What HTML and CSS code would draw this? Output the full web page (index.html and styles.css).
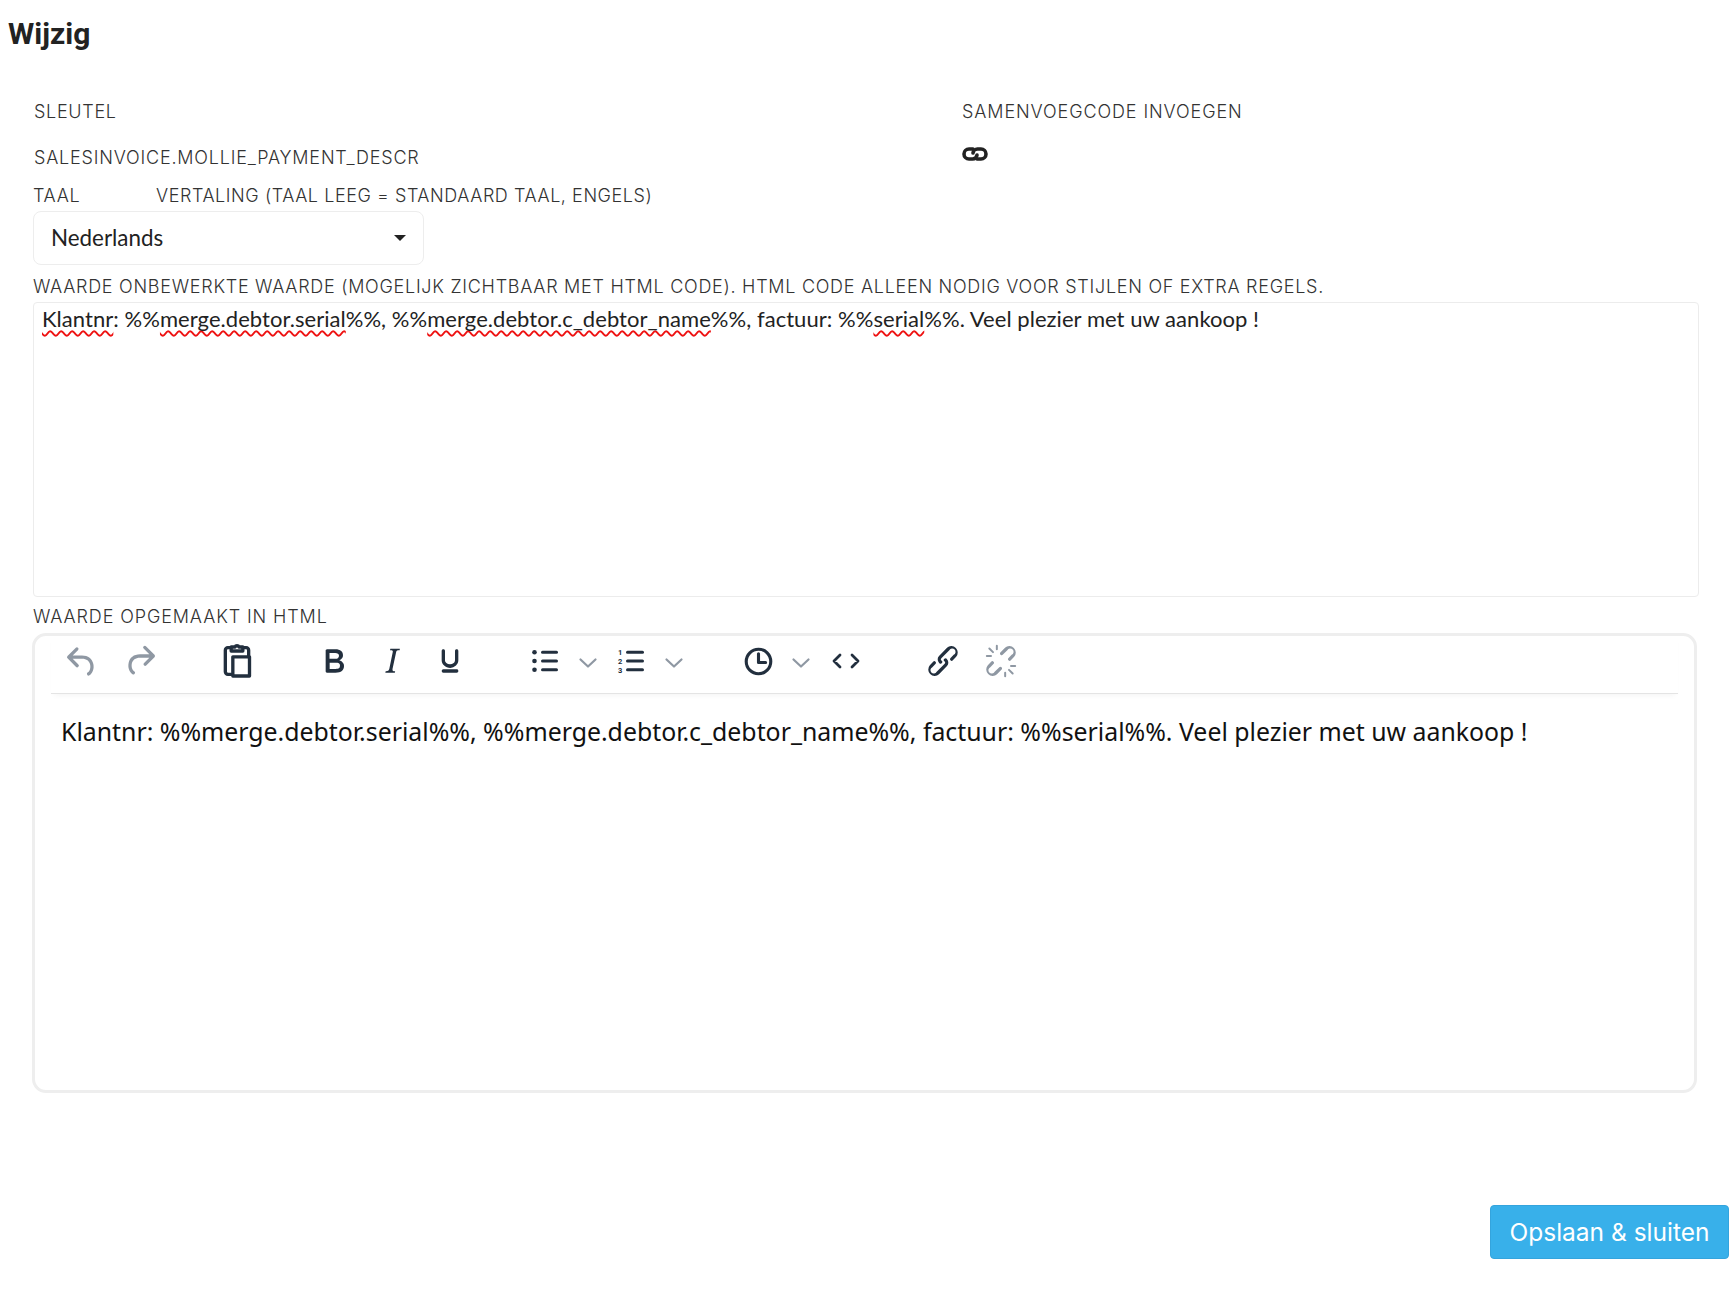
FILE: index.html
```html
<!DOCTYPE html>
<html lang="nl">
<head>
<meta charset="utf-8">
<title>Wijzig</title>
<link rel="stylesheet" href="styles.css">
</head>
<body>
<h1 class="title">Wijzig</h1>
<form class="form">
  <div class="meta">
    <div class="meta-col">
      <div class="label label-key">SLEUTEL</div>
      <div class="label label-value">SALESINVOICE.MOLLIE_PAYMENT_DESCR</div>
    </div>
    <div class="meta-col">
      <div class="label label-merge">SAMENVOEGCODE INVOEGEN</div>
      <div class="merge-icon">
        <svg width="26" height="16" viewBox="0 0 26 16" fill="none" stroke="#222" stroke-width="3.6" stroke-linecap="round"><path d="M11 3H7a5 5 0 0 0 0 10h3.5a4.5 4.5 0 0 0 4.5-4"/><path d="M15 13h4a5 5 0 0 0 0-10h-3.500a4.500 4.500 0 0 0-4.500 4"/></svg>
      </div>
    </div>
  </div>
  <div class="lang-labels">
    <span class="label label-lang">TAAL</span>
    <span class="label label-trans">VERTALING (TAAL LEEG = STANDAARD TAAL, ENGELS)</span>
  </div>
  <div class="select"><span>Nederlands</span><i class="caret"></i></div>
  <div class="label label-raw">WAARDE ONBEWERKTE WAARDE (MOGELIJK ZICHTBAAR MET HTML CODE). HTML CODE ALLEEN NODIG VOOR STIJLEN OF EXTRA REGELS.</div>
  <div class="rawtext"><span class="typo">Klantnr</span>: %%<span class="typo">merge.debtor.serial</span>%%, %%<span class="typo">merge.debtor.c_debtor_name</span>%%, factuur: %%<span class="typo">serial</span>%%. Veel plezier met uw aankoop !</div>
  <div class="label label-html">WAARDE OPGEMAAKT IN HTML</div>
  <div class="editor">
    <div class="toolbar">
      <span class="tb tb-undo dim"><svg viewBox="0 0 24 24"><path d="M6.400 8H12c3.700 0 6.200 2 6.800 5.100.6 2.700-.4 5.600-2.300 6.800a1 1 0 0 1-1-1.800c1.100-.6 1.800-2.700 1.400-4.600-.5-2.100-2.100-3.500-4.900-3.500H6.400l3.300 3.300a1 1 0 1 1-1.400 1.400l-5-5a1 1 0 0 1 0-1.400l5-5a1 1 0 0 1 1.400 1.400L6.400 8Z" transform="translate(0 .7)"/></svg></span>
      <span class="tb tb-undo tb-redo dim"><svg viewBox="0 0 24 24"><path d="M17.600 10H12c-2.800 0-4.400 1.400-4.900 3.500-.4 2 .3 4 1.400 4.600a1 1 0 1 1-1 1.800c-2-1.200-2.900-4.100-2.300-6.800.6-3 3-5.100 6.800-5.100h5.600l-3.300-3.300a1 1 0 1 1 1.400-1.400l5 5a1 1 0 0 1 0 1.400l-5 5a1 1 0 0 1-1.400-1.400l3.300-3.300Z"/></svg></span>
      <span class="tb tb-paste"><svg viewBox="0 0 24 24" class="line"><path d="M8.500 20H6.500a1.500 1.500 0 0 1-1.500-1.500V5.500A1.500 1.500 0 0 1 6.500 4H8"/><path d="M16 4h1.500A1.500 1.500 0 0 1 19 5.500V9.500"/><path d="M8.500 6V3.600h2.300a1.300 1.300 0 0 1 2.400 0h2.300V6z"/><path d="M9.500 9.500h10V21h-10z"/></svg></span>
      <span class="tb tb-b first"><svg viewBox="0 0 24 24"><path d="M7.800 19c-.3 0-.5 0-.6-.2l-.2-.5V5.700c0-.2 0-.4.2-.5l.6-.2h5c1.500 0 2.700.3 3.500 1 .7.6 1.100 1.400 1.100 2.500a3 3 0 0 1-.6 1.900c-.4.6-1 1-1.600 1.200.4.100.9.300 1.300.6s.8.700 1 1.200c.4.400.5 1 .5 1.600 0 1.300-.4 2.300-1.300 3-.8.700-2.100 1-3.800 1H7.800Zm5-8.300c.6 0 1.200-.1 1.600-.5.400-.3.6-.7.6-1.300 0-1.100-.8-1.700-2.300-1.700H9.300v3.500h3.400Zm.5 6c.7 0 1.300-.1 1.700-.4.400-.4.600-.9.600-1.500s-.2-1-.7-1.400c-.4-.3-1-.4-2-.4H9.400v3.800h4Z"/></svg></span>
      <span class="tb tb-b"><svg viewBox="0 0 24 24"><path d="M16.700 4.700l-.1.900h-.3c-.6 0-1 0-1.400.3-.3.3-.4.600-.5 1.100l-2.100 9.800v.6c0 .5.400.8 1.400.8h.2l-.2.8H8l.2-.8h.2c1.100 0 1.800-.5 2-1.500l2-9.800.1-.5c0-.6-.4-.8-1.400-.8h-.3l.2-.9h5.800Z"/></svg></span>
      <span class="tb tb-b"><svg viewBox="0 0 24 24"><path d="M16 5c.6 0 1 .4 1 1v5.500a4 4 0 0 1-.4 1.800l-1 1.400a5.300 5.300 0 0 1-5.500 1 5 5 0 0 1-1.600-1c-.5-.4-.8-.9-1.100-1.400a4 4 0 0 1-.4-1.800V6c0-.6.400-1 1-1s1 .4 1 1v5.500c0 .3 0 .6.200 1l.6.700a3.300 3.300 0 0 0 2.200.8 3.400 3.400 0 0 0 2.200-.8c.3-.2.400-.5.600-.8l.2-.9V6c0-.6.400-1 1-1ZM8 17h8c.6 0 1 .4 1 1s-.4 1-1 1H8a1 1 0 0 1 0-2Z"/></svg></span>
      <span class="tb tb-split tb-list"><svg viewBox="0 0 26 24"><circle cx="2.500" cy="3.200" r="2.300"/><circle cx="2.500" cy="12" r="2.300"/><circle cx="2.500" cy="20.800" r="2.300"/><rect x="9" y="1.700" width="17" height="3" rx="1.500"/><rect x="9" y="10.500" width="17" height="3" rx="1.500"/><rect x="9" y="19.300" width="17" height="3" rx="1.500"/></svg></span>
      <span class="tb tb-split dim"><svg class="chev" viewBox="0 0 18 10"><path d="M1.500 1.500 9 8.500l7.500-7"/></svg></span>
      <span class="tb tb-split"><svg viewBox="0 0 26 24"><text x="0" y="6" class="num">1</text><text x="0" y="14.800" class="num">2</text><text x="0" y="23.600" class="num">3</text><rect x="8" y="1.700" width="18" height="3" rx="1.500"/><rect x="8" y="10.500" width="18" height="3" rx="1.500"/><rect x="8" y="19.300" width="18" height="3" rx="1.500"/></svg></span>
      <span class="tb tb-split dim"><svg class="chev" viewBox="0 0 18 10"><path d="M1.500 1.500 9 8.500l7.500-7"/></svg></span>
      <span class="tb tb-split tb-clock"><svg viewBox="0 0 24 24" class="line"><circle cx="12" cy="12" r="9.500"/><path d="M12 6V12.800h5.500"/></svg></span>
      <span class="tb tb-split dim"><svg class="chev" viewBox="0 0 18 10"><path d="M1.500 1.500 9 8.500l7.500-7"/></svg></span>
      <span class="tb tb-split tb-code"><svg class="code" viewBox="0 0 28 16"><path d="M8 2 2 8l6 6M20 2l6 6-6 6"/></svg></span>
      <span class="tb tb-link"><svg viewBox="0 0 24 24"><path d="M6.200 12.300a1 1 0 0 1 1.400 1.400l-2 2a2 2 0 1 0 2.600 2.800l4.800-4.800a1 1 0 0 0 0-1.400 1 1 0 1 1 1.400-1.300 2.900 2.900 0 0 1 0 4L9.600 20a3.900 3.900 0 0 1-5.500-5.500l2-2Zm11.600-.6a1 1 0 0 1-1.400-1.400l2-2a2 2 0 1 0-2.600-2.800L11 10.300a1 1 0 0 0 0 1.400A1 1 0 1 1 9.600 13a2.900 2.900 0 0 1 0-4L14.400 4a3.900 3.900 0 0 1 5.500 5.500l-2 2Z"/></svg></span>
      <span class="tb tb-unlink dim"><svg viewBox="0 0 24 24"><path d="M6.200 12.300a1 1 0 0 1 1.400 1.400l-2 2a2 2 0 1 0 2.600 2.800l2.800-2.800a1 1 0 0 1 1.400 1.400L9.600 20a3.900 3.900 0 0 1-5.500-5.500l2-2Zm11.600-.6a1 1 0 0 1-1.400-1.400l2-2a2 2 0 1 0-2.600-2.800l-2.800 2.800a1 1 0 0 1-1.400-1.400L14.400 4a3.900 3.900 0 0 1 5.500 5.500l-2 2Z"/><path class="ticks" d="M5 4.500 7.200 6.700M3.500 9H6M9.500 2.800V5M19 19.500 16.800 17.300M20.500 15H18M14.500 21.200V19"/></svg></span>
    </div>
    <div class="content">Klantnr: %%merge.debtor.serial%%, %%merge.debtor.c_debtor_name%%, factuur: %%serial%%. Veel plezier met uw aankoop !</div>
  </div>
</form>
<div class="actions"><button type="button" class="save">Opslaan &amp; sluiten</button></div>
</body>
</html>
```

FILE: styles.css
```css
* { box-sizing: border-box; }
html, body { margin: 0; padding: 0; background: #fff; }
body { height: 1290px; overflow: hidden; color: #212121; font-family: "Inter", "Liberation Sans", sans-serif; }

.title { margin: 14px 0 44px 8px; font: 700 30px/40px "Roboto", "Liberation Sans", sans-serif; color: #222; }

.form { padding-left: 33px; width: 1699px; }

.label { height: 26px; padding-top: 1px; font: 300 18px/26px "Inter", "Liberation Sans", sans-serif; letter-spacing: .7px; color: #333; white-space: nowrap; }
.label-value { letter-spacing: .8px; }
.label-merge { letter-spacing: .9px; }
.label-trans { letter-spacing: .56px; }
.label-raw { letter-spacing: .72px; }
.label-html { letter-spacing: .88px; }

.meta { display: grid; grid-template-columns: 928px 1fr; padding-left: 1px; }
.label-value { margin-top: 20px; }
.merge-icon { margin-top: 22px; height: 20px; line-height: 0; }

.lang-labels { display: flex; margin-top: 12px; }
.label-lang { width: 123px; }

.select { display: flex; align-items: center; justify-content: space-between; width: 391px; height: 54px; margin-top: 3px; padding: 0 17px; border: 1px solid #ededed; border-radius: 8px; font: 400 22.400px/26px "Lato", "Liberation Sans", sans-serif; color: #222; }
.caret { width: 0; height: 0; border-left: 6px solid transparent; border-right: 6px solid transparent; border-top: 6px solid #222; }

.label-raw { margin-top: 8px; }
.rawtext { height: 295px; margin-top: 3px; padding: 3px 8px; border: 1px solid #ececec; border-radius: 4px; font: 400 22px/26px "Lato", "Liberation Sans", sans-serif; letter-spacing: .05px; color: #222; white-space: nowrap; }
.typo { text-decoration: underline wavy #e11; text-decoration-thickness: 1.500px; text-underline-offset: 3px; text-decoration-skip-ink: none; }

.label-html { margin-top: 6px; }
.editor { width: 1665px; height: 460px; margin: 4px 0 0 -1px; border: 3px solid #eee; border-radius: 14px; background: #fff; }

.toolbar { display: flex; align-items: flex-start; height: 58px; margin: 0 16px; border-bottom: 1px solid #e4e4e4; box-shadow: 0 4px 6px -3px rgba(0,0,0,.05); color: #222f3e; }
.tb { display: flex; align-items: center; justify-content: center; height: 50px; }
.tb svg { display: block; width: 40px; height: 40px; fill: currentColor; }
.tb.dim { color: #8f98a3; }
.tb-undo { width: 61px; }
.tb-redo { margin-left: -3px; }
.tb-paste { width: 61px; margin-left: 36px; }
.tb-b { width: 57.500px; }
.tb-b.first { width: 59.500px; margin-left: 37px; }
.tb-split { width: 43px; }
.tb-list { margin-left: 45px; }
.tb-code { margin-left: 2px; }
.tb-split svg { width: 26px; height: 24px; overflow: visible; }
.tb-clock { margin-left: 41px; }
.tb-clock svg { width: 31px; height: 31px; }
.tb-link { width: 58px; margin-left: 46px; }
.tb-unlink { width: 58px; }
.tb svg.line, .tb svg.chev, .tb svg.code { fill: none; stroke: currentColor; stroke-linecap: round; stroke-linejoin: round; }
.tb svg.line { stroke-width: 2; }
.tb-clock svg.line { stroke-width: 2.400; }
.tb svg.chev { width: 18px; height: 10px; stroke-width: 2.200; margin-top: 3px; }
.tb svg.code { width: 28px; height: 16px; stroke-width: 2.800; }
.ticks { fill: none; stroke: currentColor; stroke-width: 1.200; stroke-linecap: round; }
.num { font: 700 7.500px "Roboto", "Liberation Sans", sans-serif; fill: currentColor; }

.content { padding: 21px 26px; font: 400 24.850px/32px "Noto Sans", "Open Sans", sans-serif; color: #111; white-space: nowrap; }

.actions { display: flex; justify-content: flex-end; margin-top: 112px; padding-right: 7px; }
.save { width: 239px; height: 54px; padding: 0; border: 1px solid #34a4dd; border-radius: 4px; background: #38b0ea; color: #fff; font: 400 24.500px/30px "Inter", "Liberation Sans", sans-serif; }
```
